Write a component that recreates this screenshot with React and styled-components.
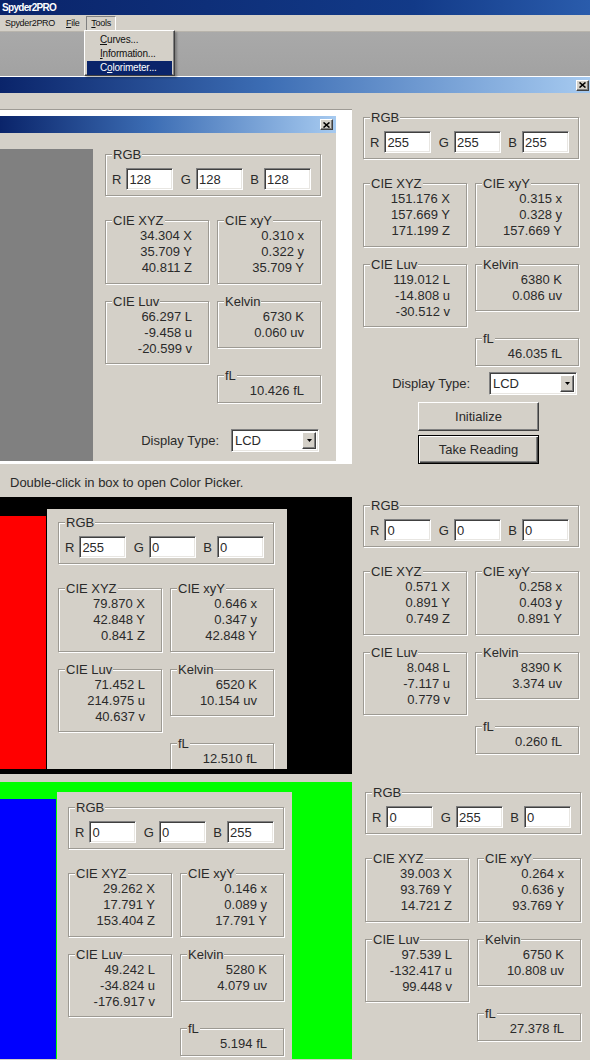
import React from 'react';
import styled, { createGlobalStyle, css } from 'styled-components';

const BEIGE = '#d4d0c8';

const GlobalStyle = createGlobalStyle`
  html, body { margin: 0; padding: 0; background: ${BEIGE}; }
  body { font-family: "Liberation Sans", Arial, sans-serif; color: #2a2a2a; }
  * { box-sizing: border-box; }
`;

const readings = {
  gray: { rgb: ['128', '128', '128'], xyz: ['34.304 X', '35.709 Y', '40.811 Z'], xyy: ['0.310 x', '0.322 y', '35.709 Y'], luv: ['66.297 L', '-9.458 u', '-20.599 v'], kelvin: ['6730 K', '0.060 uv'], fl: '10.426 fL' },
  white: { rgb: ['255', '255', '255'], xyz: ['151.176 X', '157.669 Y', '171.199 Z'], xyy: ['0.315 x', '0.328 y', '157.669 Y'], luv: ['119.012 L', '-14.808 u', '-30.512 v'], kelvin: ['6380 K', '0.086 uv'], fl: '46.035 fL' },
  red: { rgb: ['255', '0', '0'], xyz: ['79.870 X', '42.848 Y', '0.841 Z'], xyy: ['0.646 x', '0.347 y', '42.848 Y'], luv: ['71.452 L', '214.975 u', '40.637 v'], kelvin: ['6520 K', '10.154 uv'], fl: '12.510 fL' },
  black: { rgb: ['0', '0', '0'], xyz: ['0.571 X', '0.891 Y', '0.749 Z'], xyy: ['0.258 x', '0.403 y', '0.891 Y'], luv: ['8.048 L', '-7.117 u', '0.779 v'], kelvin: ['8390 K', '3.374 uv'], fl: '0.260 fL' },
  blue: { rgb: ['0', '0', '255'], xyz: ['29.262 X', '17.791 Y', '153.404 Z'], xyy: ['0.146 x', '0.089 y', '17.791 Y'], luv: ['49.242 L', '-34.824 u', '-176.917 v'], kelvin: ['5280 K', '4.079 uv'], fl: '5.194 fL' },
  green: { rgb: ['0', '255', '0'], xyz: ['39.003 X', '93.769 Y', '14.721 Z'], xyy: ['0.264 x', '0.636 y', '93.769 Y'], luv: ['97.539 L', '-132.417 u', '99.448 v'], kelvin: ['6750 K', '10.808 uv'], fl: '27.378 fL' },
};

const raised = css`
  border: 1px solid;
  border-color: #fff #404040 #404040 #fff;
  box-shadow: inset -1px -1px 0 #808080;
`;

const sunken = css`
  border: 1px solid;
  border-color: #808080 #fff #fff #808080;
  box-shadow: inset 1px 1px 0 #404040, inset -1px -1px 0 #e8e6e2;
`;

/* ---------- app chrome ---------- */

const Screen = styled.div`
  width: 590px;
  height: 1060px;
  overflow: hidden;
  background: ${BEIGE};
`;

const AppTitle = styled.div`
  height: 15px;
  padding-left: 2px;
  background: linear-gradient(90deg, #0a246a 0%, #123a88 70%, #2a5cac 100%);
  color: #fff;
  font-weight: bold;
  font-size: 10px;
  line-height: 15px;
  letter-spacing: -0.7px;
`;

const MenuBar = styled.div`
  height: 17px;
  display: flex;
  align-items: center;
  padding-left: 1px;
  gap: 3px;
  font-size: 9px;
  letter-spacing: -0.3px;
  color: #111;
  border-bottom: 1px solid #b8b4ac;
`;

const MenuItem = styled.span`
  height: 15px;
  line-height: 13px;
  padding: 0 3px;
  border: 1px solid transparent;
  ${p => p.$open && css`
    padding: 0 4px;
    border-color: #808080 #fff #fff #808080;
  `}
`;

const Workspace = styled.div`
  position: relative;
  height: 44px;
  background: linear-gradient(180deg, #a9a9a9, #a2a2a2);
`;

const Dropdown = styled.div`
  position: absolute;
  left: 84px;
  top: -2px;
  width: 91px;
  height: 46px;
  padding: 2px 2px;
  background: ${BEIGE};
  ${raised};
  box-shadow: inset -1px -1px 0 #808080, 2px 2px 2px rgba(0, 0, 0, 0.25);
  font-size: 10px;
  letter-spacing: -0.2px;
`;

const DropItem = styled.div`
  height: 14px;
  line-height: 14px;
  padding-left: 13px;
  color: ${p => (p.$active ? '#fff' : '#111')};
  background: ${p => (p.$active ? '#0a246a' : 'transparent')};
`;

const WhiteRule = styled.div`
  height: 1px;
  background: #fff;
`;

const Caption = styled.div`
  height: ${p => p.$h}px;
  display: flex;
  align-items: center;
  justify-content: flex-end;
  padding-right: ${p => p.$pr}px;
  background: linear-gradient(90deg, #0a246a 0%, #3c6db4 45%, #a6caf0 100%);
`;

const CloseBox = styled.div`
  width: 13px;
  height: 11px;
  display: flex;
  align-items: center;
  justify-content: center;
  background: ${BEIGE};
  ${raised};
`;

function CloseButton() {
  return (
    <CloseBox>
      <svg width="7" height="6" viewBox="0 0 7 6">
        <path d="M0.5 0.5 L6.5 5.5 M6.5 0.5 L0.5 5.5" stroke="#000" strokeWidth="1.6" />
      </svg>
    </CloseBox>
  );
}

/* ---------- layout grid ---------- */

const Grid = styled.div`
  display: grid;
  grid-template-columns: 352px 238px;
  grid-template-rows: 404px 277px 285px;
`;

const Cell = styled.div`
  background: ${p => p.$bg || BEIGE};
  padding: ${p => p.$pad || '0'};
  overflow: hidden;
`;

const TopStrip = styled.div`
  height: 17px;
  border-bottom: 1px solid #9e9b95;
`;

const DialogFrame = styled.div`
  background: #fff;
  padding: 6px 16px 3px 0;
`;

const DialogBody = styled.div`
  height: 328px;
  display: flex;
  background: ${BEIGE};
`;

const Swatch = styled.div`
  width: ${p => p.$w}px;
  margin-top: ${p => p.$top}px;
  background: ${p => p.$color};
  flex-shrink: 0;
`;

const StatusBar = styled.div`
  height: 33px;
  padding: 3px 0 0 10px;
  display: flex;
  align-items: center;
  font-size: 13px;
`;

const ShotRow = styled.div`
  display: flex;
  align-items: flex-start;
  height: ${p => p.$h}px;
  gap: ${p => p.$gap || 0}px;
  background: ${p => p.$bg || 'transparent'};
`;

const SwatchFull = styled.div`
  width: ${p => p.$w}px;
  align-self: stretch;
  margin-top: ${p => p.$top}px;
  background: ${p => p.$color};
  flex-shrink: 0;
`;

const Sheet = styled.div`
  width: ${p => p.$w}px;
  height: ${p => p.$h}px;
  margin-top: ${p => p.$top}px;
  padding: ${p => p.$pad};
  background: ${BEIGE};
  overflow: hidden;
  flex-shrink: 0;
`;

/* ---------- readout panel ---------- */

const Panel = styled.div`
  width: 216px;
  padding-top: ${p => p.$top || 0}px;
  margin-left: ${p => p.$left || 0}px;
  font-size: 13px;
`;

const Group = styled.div`
  width: ${p => p.$w || 104}px;
  height: ${p => p.$h}px;
  margin-top: ${p => p.$mt || 0}px;
  padding: 0 16px 0 6px;
  border: 1px solid #9d9a93;
  box-shadow: inset 1px 1px 0 #fff, 1px 1px 0 #fff;
`;

const Legend = styled.div`
  width: fit-content;
  margin-top: -8px;
  padding: 0 1px;
  line-height: 15px;
  background: ${BEIGE};
  white-space: nowrap;
`;

const Value = styled.div`
  line-height: 16px;
  text-align: right;
  white-space: nowrap;
`;

const InputRow = styled.div`
  display: flex;
  justify-content: space-between;
  margin-top: 6px;
  margin-right: -7px;
`;

const Field = styled.label`
  display: flex;
  align-items: center;
  gap: 5px;
`;

const TextBox = styled.input`
  width: 47px;
  height: 22px;
  padding: 0 2px;
  font: inherit;
  font-size: 13px;
  color: #2a2a2a;
  background: #fff;
  ${sunken};
  outline: none;
`;

const Columns = styled.div`
  display: flex;
  gap: 8px;
  margin-top: 24px;
`;

const Column = styled.div`
  display: flex;
  flex-direction: column;
`;

const DisplayRow = styled.div`
  display: flex;
  align-items: center;
  justify-content: flex-end;
  gap: ${p => p.$gap}px;
  margin-top: ${p => p.$mt}px;
  padding-right: 2px;
`;

const Select = styled.div`
  width: 88px;
  height: 23px;
  display: flex;
  align-items: stretch;
  background: #fff;
  ${sunken};
  padding: 2px;
`;

const SelectText = styled.span`
  flex: 1;
  line-height: 18px;
  padding-left: 1px;
`;

const SelectArrow = styled.span`
  width: 14px;
  display: flex;
  align-items: center;
  justify-content: center;
  background: ${BEIGE};
  ${raised};
`;

const Button = styled.button`
  display: block;
  width: 121px;
  height: 29px;
  margin: ${p => p.$mt}px 0 0 55px;
  font: inherit;
  font-size: 13px;
  color: #2a2a2a;
  background: ${BEIGE};
  ${raised};
  ${p => p.$default && css`
    border: 1px solid #000;
    box-shadow: inset 1px 1px 0 #fff, inset -1px -1px 0 #404040, inset -2px -2px 0 #808080;
  `}
`;

function Readout({ data, top, left, display, buttons }) {
  const [r, g, b] = data.rgb;
  return (
    <Panel $top={top} $left={left}>
      <Group $w={216} $h={42} $mt={8}>
        <Legend>RGB</Legend>
        <InputRow>
          <Field>R<TextBox readOnly value={r} /></Field>
          <Field>G<TextBox readOnly value={g} /></Field>
          <Field>B<TextBox readOnly value={b} /></Field>
        </InputRow>
      </Group>
      <Columns>
        <Column>
          <Group $h={64}>
            <Legend>CIE XYZ</Legend>
            {data.xyz.map(v => <Value key={v}>{v}</Value>)}
          </Group>
          <Group $h={63} $mt={17}>
            <Legend>CIE Luv</Legend>
            {data.luv.map(v => <Value key={v}>{v}</Value>)}
          </Group>
        </Column>
        <Column>
          <Group $h={64}>
            <Legend>CIE xyY</Legend>
            {data.xyy.map(v => <Value key={v}>{v}</Value>)}
          </Group>
          <Group $h={47} $mt={17}>
            <Legend>Kelvin</Legend>
            {data.kelvin.map(v => <Value key={v}>{v}</Value>)}
          </Group>
          <Group $h={28} $mt={27}>
            <Legend>fL</Legend>
            <Value>{data.fl}</Value>
          </Group>
        </Column>
      </Columns>
      {display && (
        <DisplayRow $mt={display.mt} $gap={display.gap}>
          <span>Display Type:</span>
          <Select>
            <SelectText>LCD</SelectText>
            <SelectArrow>
              <svg width="5" height="3" viewBox="0 0 5 3"><path d="M0 0 H5 L2.5 3 Z" fill="#000" /></svg>
            </SelectArrow>
          </Select>
        </DisplayRow>
      )}
      {buttons && (
        <>
          <Button $mt={7}>Initialize</Button>
          <Button $mt={4} $default>Take Reading</Button>
        </>
      )}
    </Panel>
  );
}

export default function App() {
  return (
    <Screen>
      <GlobalStyle />
      <AppTitle>Spyder2PRO</AppTitle>
      <MenuBar>
        <MenuItem>Spyder2PRO</MenuItem>
        <MenuItem><u>F</u>ile</MenuItem>
        <MenuItem $open><u>T</u>ools</MenuItem>
      </MenuBar>
      <Workspace>
        <Dropdown>
          <DropItem><u>C</u>urves...</DropItem>
          <DropItem><u>I</u>nformation...</DropItem>
          <DropItem $active>C<u>o</u>lorimeter...</DropItem>
        </Dropdown>
      </Workspace>
      <WhiteRule />
      <Caption $h={16} $pr={1}><CloseButton /></Caption>

      <Grid>
        <Cell>
          <TopStrip />
          <DialogFrame>
            <Caption $h={17} $pr={3}><CloseButton /></Caption>
            <DialogBody>
              <Swatch $w={93} $top={16} $color="#808080" />
              <Readout data={readings.gray} top={13} left={12} display={{ mt: 26, gap: 12 }} />
            </DialogBody>
          </DialogFrame>
          <StatusBar>Double-click in box to open Color Picker.</StatusBar>
        </Cell>
        <Cell $pad="16px 0 0 11px">
          <Readout data={readings.white} display={{ mt: 6, gap: 19 }} buttons />
        </Cell>

        <Cell $bg="#000">
          <ShotRow $h={272} $gap={1}>
            <SwatchFull $w={46} $top={19} $color="#ff0000" />
            <Sheet $w={240} $h={260} $top={12} $pad="5px 0 0 11px">
              <Readout data={readings.red} />
            </Sheet>
          </ShotRow>
        </Cell>
        <Cell $pad="0 0 0 11px">
          <Readout data={readings.black} />
        </Cell>

        <Cell $pad="8px 0 0 0">
          <ShotRow $h={277} $gap={1} $bg="#00ff00">
            <SwatchFull $w={56} $top={17} $color="#0000ff" />
            <Sheet $w={235} $h={267} $top={10} $pad="7px 0 0 11px">
              <Readout data={readings.blue} />
            </Sheet>
          </ShotRow>
        </Cell>
        <Cell $pad="10px 0 0 13px">
          <Readout data={readings.green} />
        </Cell>
      </Grid>
    </Screen>
  );
}
